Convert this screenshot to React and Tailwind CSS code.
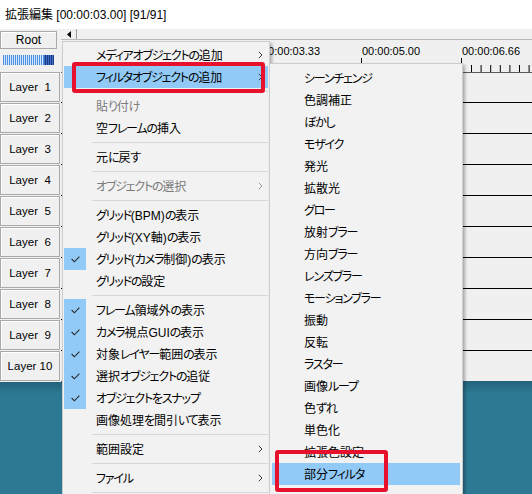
import React from 'react';

const FONT = "font-['Liberation_Sans','Noto_Sans_CJK_JP',sans-serif]";

const Check = () => (
  <svg width="9" height="7" viewBox="0 0 9 7">
    <path d="M0.6 3 L3.4 5.8 L8.4 0.7" fill="none" stroke="#2b2b2b" strokeWidth="1.1" />
  </svg>
);

const Chevron = ({ c = '#3c3c3c' }) => (
  <svg width="5" height="8" viewBox="0 0 5 8">
    <path d="M0.8 0.8 L4 4 L0.8 7.2" fill="none" stroke={c} strokeWidth="1" />
  </svg>
);

const mainItems = [
  { t: 'メディアオブジェクトの追加', arrow: true },
  { t: 'フィルタオブジェクトの追加', arrow: true, hl: true },
  { sep: true },
  { t: '貼り付け', dis: true },
  { t: '空フレームの挿入' },
  { sep: true },
  { t: '元に戻す' },
  { sep: true },
  { t: 'オブジェクトの選択', dis: true, arrow: true },
  { sep: true },
  { t: 'グリッド(BPM)の表示' },
  { t: 'グリッド(XY軸)の表示' },
  { t: 'グリッド(カメラ制御)の表示', check: true },
  { t: 'グリッドの設定' },
  { sep: true },
  { t: 'フレーム領域外の表示', check: true },
  { t: 'カメラ視点GUIの表示', check: true },
  { t: '対象レイヤー範囲の表示', check: true },
  { t: '選択オブジェクトの追従', check: true },
  { t: 'オブジェクトをスナップ', check: true },
  { t: '画像処理を間引いて表示' },
  { sep: true },
  { t: '範囲設定', arrow: true },
  { sep: true },
  { t: 'ファイル', arrow: true },
  { sep: true },
];

const subItems = [
  'シーンチェンジ', '色調補正', 'ぼかし', 'モザイク', '発光', '拡散光', 'グロー',
  '放射ブラー', '方向ブラー', 'レンズブラー', 'モーションブラー', '振動', '反転',
  'ラスター', '画像ループ', '色ずれ', '単色化', '拡張色設定', '部分フィルタ',
];

// split text into kana runs (narrowed) and other runs
function JpText({ text }) {
  const parts = text.match(/[\u3041-\u3096\u30A1-\u30FC]+|[^\u3041-\u3096\u30A1-\u30FC]+/g) || [];
  return (
    <>
      {parts.map((p, i) =>
        /[\u3041-\u3096\u30A1-\u30FC]/.test(p) ? (
          <span key={i} className="tracking-[-1.2px]">{p}</span>
        ) : (
          <span key={i}>{p}</span>
        )
      )}
    </>
  );
}

function MenuRow({ it }) {
  return (
    <div className={`h-[22px] flex items-center ${it.hl ? 'bg-[#91c9f7]' : ''}`}>
      <div className={`w-[22px] h-full flex items-center justify-center ${it.check ? 'bg-[#91c9f7]' : ''}`}>
        {it.check && <Check />}
      </div>
      <div className={`ml-[10px] flex-1 whitespace-nowrap text-[12px] h-full pt-[2px] leading-[20px] [font-feature-settings:'palt'] ${it.dis ? 'text-[#7a7a7a]' : 'text-black'}`}>
        <JpText text={it.t} />
      </div>
      {it.arrow && (
        <div className="mr-[5px] flex items-center">
          <Chevron c={it.dis ? '#9a9a9a' : '#3c3c3c'} />
        </div>
      )}
    </div>
  );
}

function MainMenu() {
  return (
    <div className="absolute left-[62px] top-[41px] w-[208px] h-[470px] border border-[#cccccc] bg-[#f2f2f2] pt-[2px] px-[1px] shadow-[2px_2px_3px_rgba(0,0,0,0.28)]">
      {mainItems.map((it, i) =>
        it.sep ? (
          <div key={i} className="h-[7px] flex items-center pl-[28px]">
            <div className="h-px w-full bg-[#d7d7d7]" />
          </div>
        ) : (
          <MenuRow key={i} it={it} />
        )
      )}
    </div>
  );
}

function SubMenu() {
  return (
    <div className="absolute left-[269px] top-[63px] w-[194px] h-[460px] border border-[#cccccc] bg-[#f2f2f2] pt-[3px] px-[2px] shadow-[2px_2px_3px_rgba(0,0,0,0.3)]">
      {subItems.map((t, i) => (
        <MenuRow key={i} it={{ t, hl: t === '部分フィルタ' }} />
      ))}
    </div>
  );
}

function BlueBars() {
  const lines = [];
  for (let x = 0; x < 51; x += 2) {
    lines.push(
      <rect key={x} x={x} y="0" width="1" height="10" fill={x >= 41 ? '#1f3b86' : '#4d8fe0'} />
    );
  }
  return (
    <svg width="51" height="10" viewBox="0 0 51 10">
      <rect x="0" y="0" width="51" height="10" fill="#d4e6fb" />
      <rect x="41" y="0" width="10" height="10" fill="#3e6fc8" />
      {lines}
    </svg>
  );
}

function LayerButton({ n }) {
  const label = n < 10 ? `Layer  ${n}` : `Layer ${n}`;
  return (
    <div className="h-[31px] pb-[1px]">
      <div className="h-[30px] w-[60px] border border-[#a9a9a9] bg-[#f0f0f0] shadow-[inset_1px_1px_0_#ffffff] flex items-center justify-center pt-[2px] text-[11.5px] text-black whitespace-pre">
        {label}
      </div>
    </div>
  );
}

function Ruler() {
  const minor = [];
  for (let k = 0; k < 7; k++) {
    const x = 410.5 + k * 9.6;
    minor.push(<line key={k} x1={x} y1="25" x2={x} y2="32" stroke="#000" strokeWidth="1" />);
  }
  return (
    <div className="h-[33px] border-b border-[#5a5a5a] relative">
      <svg className="absolute left-0 top-0" width="471" height="32" viewBox="0 0 471 32">
        <line x1="200.5" y1="18" x2="200.5" y2="32" stroke="#000" />
        <line x1="300.5" y1="18" x2="300.5" y2="32" stroke="#000" />
        <line x1="400.5" y1="18" x2="400.5" y2="32" stroke="#000" />
        {minor}
      </svg>
      <div className="absolute left-[201px] top-[5px] text-[11px] leading-[13px] text-black">00:00:03.33</div>
      <div className="absolute left-[301px] top-[5px] text-[11px] leading-[13px] text-black">00:00:05.00</div>
      <div className="absolute left-[401px] top-[5px] text-[11px] leading-[13px] text-black">00:00:06.66</div>
    </div>
  );
}

export default function App() {
  const layers = [1, 2, 3, 4, 5, 6, 7, 8, 9, 10];
  return (
    <div className={`w-[532px] h-[494px] overflow-hidden relative bg-[#f0f0f0] ${FONT}`}>
      <div className="h-[29px] bg-white flex items-center pl-[5px] text-[12px] text-black">
        拡張編集 [00:00:03.00] [91/91]
      </div>
      <div className="flex h-[465px]">
        <div className="w-[61px] flex flex-col">
          <div className="h-[43px] flex flex-col">
            <div className="mt-[2px] w-[57px] h-[18px] border border-[#a9a9a9] bg-[#f0f0f0] shadow-[inset_1px_1px_0_#ffffff] flex items-center justify-center text-[12px] text-black">
              Root
            </div>
            <div className="mt-[6px] ml-[3px] flex">
              <BlueBars />
            </div>
          </div>
          {layers.map((n) => (
            <LayerButton key={n} n={n} />
          ))}
          <div className="flex-1 bg-[linear-gradient(to_bottom,#24627b,#2d7893_12px)]" />
        </div>
        <div className="flex-1 flex flex-col">
          <div className="h-[11px] border-b border-[#b9b9b9] flex">
            <div className="ml-[1px] w-[15px] h-full border-r border-[#9a9a9a] flex items-center justify-center">
              <svg width="4" height="7" viewBox="0 0 4 7">
                <path d="M4 0 L0 3.5 L4 7 Z" fill="#000" />
              </svg>
            </div>
          </div>
          <Ruler />
          <div className="h-[30px] border-b border-black" />
          {[2, 3, 4, 5, 6, 7, 8, 9].map((n) => (
            <div key={n} className="h-[31px] border-b border-black" />
          ))}
          <div className="h-[30px]" />
          <div className="flex-1 bg-[linear-gradient(to_bottom,#24627b,#2d7893_12px)]" />
        </div>
      </div>

      <MainMenu />
      <SubMenu />

      <div className="absolute left-[72px] top-[62px] w-[193px] h-[31px] border-[4px] border-[#e8112d] rounded-[3px]" />
      <div className="absolute left-[275px] top-[450px] w-[113px] h-[42px] border-[4px] border-[#e8112d] rounded-[3px]" />
    </div>
  );
}
